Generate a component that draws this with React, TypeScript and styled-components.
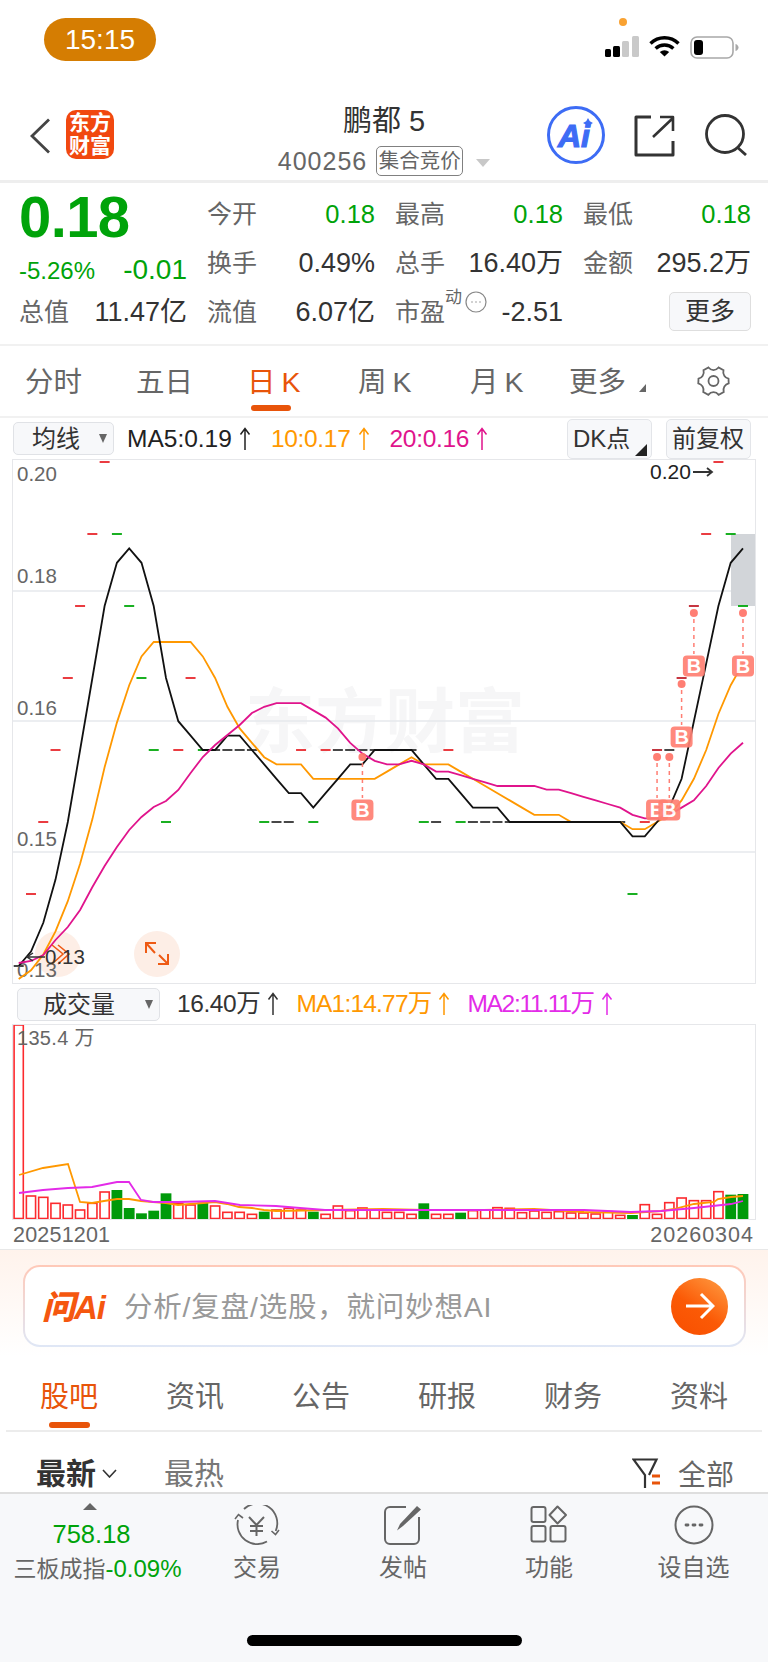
import styled, { createGlobalStyle } from 'styled-components';

const GlobalStyle = createGlobalStyle`
  html, body {
    margin: 0;
    padding: 0;
    background: #fff;
  }
  body {
    font-family: "Liberation Sans", "Noto Sans CJK SC", sans-serif;
  }
`;

const GREEN = '#00a30a';
const ACCENT = '#e8540a';
const ORANGE = '#ff9800';
const PINK = '#e0148c';
const MAGENTA = '#e32be8';

const Page = styled.div`
  width: 768px;
  height: 1663px;
  overflow: hidden;
  background: #fff;
`;

/* status bar */
const StatusBar = styled.div`
  height: 95px;
  box-sizing: border-box;
  padding: 18px 29px 0 44px;
  display: flex;
  justify-content: space-between;
`;

const TimePill = styled.div`
  width: 112px;
  height: 43px;
  border-radius: 22px;
  background: #d57d02;
  color: #fff;
  font-size: 28px;
  line-height: 43px;
  text-align: center;
`;

const StatusIcons = styled.div`
  position: relative;
  padding-top: 18px;
  display: flex;
  align-items: flex-start;
  gap: 10px;
`;

const RecordingDot = styled.span`
  position: absolute;
  top: 0;
  left: 14px;
  width: 8px;
  height: 8px;
  border-radius: 50%;
  background: #f9a232;
`;

/* nav */
const NavBar = styled.div`
  height: 88px;
  box-sizing: border-box;
  border-bottom: 3px solid #eeeeee;
  padding: 8px 20px 0;
  display: grid;
  grid-template-columns: 1fr auto 1fr;
`;

const NavLeft = styled.div`
  display: flex;
  align-items: flex-start;
  gap: 16px;
  padding: 7px 0 0 10px;
`;

const NavIcon = styled.svg<{ $top?: number }>`
  margin-top: ${(p) => p.$top ?? 0}px;
`;

const BrandLogo = styled.div`
  width: 48px;
  height: 49px;
  border-radius: 10px;
  background: #f1480f;
  color: #fff;
  font-size: 21px;
  font-weight: 700;
  line-height: 23px;
  text-align: center;
  padding-top: 1px;
  box-sizing: border-box;
`;

const NavCenter = styled.div`
  display: flex;
  flex-direction: column;
  align-items: center;
`;

const StockName = styled.div`
  font-size: 29px;
  line-height: 36px;
  color: #333;
`;

const StockMeta = styled.div`
  display: flex;
  align-items: center;
  margin-top: 7px;
`;

const StockCode = styled.span`
  font-size: 25px;
  letter-spacing: 1px;
  color: #666;
  margin-right: 9px;
`;

const StateTag = styled.span`
  width: 87px;
  height: 30px;
  box-sizing: border-box;
  border: 1px solid #808080;
  border-radius: 5px;
  font-size: 20.5px;
  line-height: 28px;
  text-align: center;
  color: #666;
  white-space: nowrap;
`;

const MetaCaret = styled.span`
  margin-left: 13px;
  margin-top: 3px;
  border-left: 7px solid transparent;
  border-right: 7px solid transparent;
  border-top: 8px solid #c8c8c8;
`;

const NavRight = styled.div`
  display: flex;
  justify-content: flex-end;
  align-items: flex-start;
  gap: 29px;
  padding-top: 3px;
`;

/* quote */
const Quote = styled.div`
  height: 163px;
  box-sizing: border-box;
  border-bottom: 2px solid #f1f1f1;
  padding: 6px 0 0 19px;
  display: grid;
  grid-template-columns: repeat(4, 168px);
  column-gap: 20px;
  grid-template-rows: 49px 49px 49px;
  align-items: center;
`;

const PriceBlock = styled.div`
  grid-row: 1 / 3;
  align-self: start;
`;

const BigPrice = styled.div`
  font-size: 58px;
  font-weight: 700;
  line-height: 56px;
  color: ${GREEN};
  letter-spacing: -0.6px;
`;

const ChangeRow = styled.div`
  display: flex;
  justify-content: space-between;
  align-items: baseline;
  margin-top: 9px;
  color: ${GREEN};
`;

const ChangePct = styled.span`
  font-size: 24px;
`;

const ChangeAbs = styled.span`
  font-size: 28px;
`;

const QuoteCell = styled.div`
  display: flex;
  justify-content: space-between;
  align-items: center;
  font-size: 25px;
  line-height: 30px;
  white-space: nowrap;
`;

const QuoteLabel = styled.span`
  color: #666;
  position: relative;
`;

const QuoteValue = styled.span<{ $green?: boolean }>`
  font-size: ${(p) => (p.$green ? 25.5 : 27)}px;
  color: ${(p) => (p.$green ? GREEN : '#333')};
`;

const PeLabel = styled.span`
  display: flex;
  align-items: flex-start;
  color: #666;
`;

const PeSup = styled.span`
  font-size: 17px;
  line-height: 18px;
  margin-top: -8px;
`;

const PeDots = styled.svg`
  margin: -6px 0 0 3px;
`;

const MoreCell = styled.div`
  display: flex;
  justify-content: flex-end;
`;

const MoreButton = styled.div`
  width: 82px;
  height: 39px;
  box-sizing: border-box;
  border: 1px solid #dedede;
  border-radius: 5px;
  background: #f7f8fa;
  font-size: 25px;
  line-height: 37px;
  text-align: center;
  color: #333;
`;

/* period tabs */
const PeriodTabs = styled.div`
  height: 72px;
  box-sizing: border-box;
  border-bottom: 2px solid #f1f1f1;
  padding: 0 38px 0 25px;
  display: flex;
  align-items: center;
`;

const PeriodTab = styled.div<{ $active?: boolean; $width: number }>`
  position: relative;
  width: ${(p) => p.$width}px;
  font-size: 28.5px;
  line-height: 40px;
  margin-top: 2px;
  word-spacing: -2px;
  color: ${(p) => (p.$active ? ACCENT : '#666')};
  white-space: nowrap;

  ${(p) =>
    p.$active &&
    `
    &::after {
      content: '';
      position: absolute;
      left: 4px;
      top: 43px;
      width: 40px;
      height: 6px;
      border-radius: 3px;
      background: ${ACCENT};
    }
  `}
`;

const MoreTab = styled(PeriodTab)`
  &::before {
    content: '';
    position: absolute;
    left: 70px;
    top: 22px;
    border-left: 7px solid transparent;
    border-bottom: 8px solid #666;
  }
`;

const GearSlot = styled.div`
  margin-left: auto;
  height: 32px;
`;

/* chart toolbars */
const ChartBar = styled.div<{ $height: number; $pad: number; $gap: number }>`
  height: ${(p) => p.$height}px;
  box-sizing: border-box;
  padding: 0 17px 0 ${(p) => p.$pad}px;
  display: flex;
  align-items: center;
  gap: ${(p) => p.$gap}px;
  white-space: nowrap;
`;

const SelectBox = styled.div<{ $width: number; $indent: number; $trail?: number }>`
  position: relative;
  width: ${(p) => p.$width}px;
  height: 33px;
  box-sizing: border-box;
  border: 1px solid #e0e2e6;
  border-radius: 5px;
  background: #f7f8fa;
  padding-left: ${(p) => p.$indent}px;
  margin-right: ${(p) => p.$trail ?? 0}px;
  font-size: 24px;
  line-height: 31px;
  color: #333;

  &::after {
    content: '';
    position: absolute;
    right: 6px;
    top: 11px;
    border-left: 4.5px solid transparent;
    border-right: 4.5px solid transparent;
    border-top: 9px solid #666;
  }
`;

const Legend = styled.span<{ $color: string; $tight?: number }>`
  display: inline-flex;
  align-items: center;
  gap: 7px;
  font-size: 24.5px;
  line-height: 30px;
  letter-spacing: ${(p) => p.$tight ?? 0}px;
  color: ${(p) => p.$color};
`;

const BarActions = styled.div`
  margin-left: auto;
  display: flex;
  gap: 14px;
`;

const BarButton = styled.div<{ $corner?: boolean }>`
  position: relative;
  width: 85px;
  height: 40px;
  box-sizing: border-box;
  border: 1px solid #e3e5e9;
  border-radius: 5px;
  background: #f7f8fa;
  padding-left: 5px;
  font-size: 24px;
  line-height: 38px;
  color: #333;

  ${(p) =>
    p.$corner &&
    `
    &::after {
      content: '';
      position: absolute;
      right: 4px;
      bottom: 2px;
      border-left: 12px solid transparent;
      border-bottom: 12px solid #222;
    }
  `}
`;

const ChartPanel = styled.div<{ $height: number }>`
  margin-left: 12px;
  width: 744px;
  height: ${(p) => p.$height}px;
  box-sizing: border-box;
  border: 1px solid #e6e7ea;
`;

const ChartSvg = styled.svg`
  display: block;
`;

const DateRow = styled.div`
  height: 30px;
  box-sizing: border-box;
  padding: 2px 14px 0 13px;
  border-bottom: 1px solid #e8e8e8;
  display: flex;
  justify-content: space-between;
  font-size: 21.5px;
  line-height: 26px;
  letter-spacing: 0.2px;
  color: #666;
`;

const DateEnd = styled.span`
  letter-spacing: 1px;
`;

/* ask AI */
const AskSection = styled.div`
  height: 112px;
  box-sizing: border-box;
  padding: 15px 22px 0 23px;
  background: linear-gradient(#fff3ec, #ffffff 95%);
`;

const AskBox = styled.div`
  height: 82px;
  box-sizing: border-box;
  border-radius: 17px;
  border: 2px solid transparent;
  background: linear-gradient(#fff, #fff) padding-box,
    linear-gradient(#ffc9b8, #dfe7f6) border-box;
  padding: 0 16px 0 17px;
  display: flex;
  align-items: center;
`;

const AskBrand = styled.span`
  width: 82px;
  margin-top: -3px;
  font-size: 33px;
  font-weight: 900;
  font-style: italic;
  letter-spacing: -1px;
  color: #f5570f;
  white-space: nowrap;
`;

const AskText = styled.span`
  margin-top: -3px;
  font-size: 28.5px;
  letter-spacing: 0.8px;
  color: #999;
  white-space: nowrap;
`;

const AskGo = styled.div`
  margin-left: auto;
  width: 57px;
  height: 57px;
  border-radius: 50%;
  background: linear-gradient(215deg, #ff9f45, #fb5a06 55%, #f84e00);
  display: flex;
  align-items: center;
  justify-content: center;
`;

/* content tabs */
const ContentTabs = styled.div`
  height: 70px;
  margin: 0 6px;
  box-sizing: border-box;
  border-bottom: 2px solid #ececec;
  padding: 15px 34px 0;
  display: flex;
  justify-content: space-between;
  align-items: flex-start;
`;

const ContentTab = styled.div<{ $active?: boolean }>`
  position: relative;
  font-size: 29px;
  line-height: 40px;
  color: ${(p) => (p.$active ? ACCENT : '#666')};

  ${(p) =>
    p.$active &&
    `
    &::after {
      content: '';
      position: absolute;
      left: 9px;
      top: 45px;
      width: 41px;
      height: 6px;
      border-radius: 3px;
      background: ${ACCENT};
    }
  `}
`;

const FeedFilter = styled.div`
  height: 60px;
  box-sizing: border-box;
  padding: 23px 34px 0 36px;
  display: flex;
  align-items: center;
`;

const FeedSort = styled.span<{ $active?: boolean }>`
  font-size: 30px;
  font-weight: ${(p) => (p.$active ? 700 : 400)};
  line-height: 38px;
  color: ${(p) => (p.$active ? '#333' : '#777')};
`;

const SortChevron = styled.svg`
  margin: 0 47px 0 6px;
`;

const FeedAll = styled.span`
  margin: -2px 0 0 auto;
  display: flex;
  align-items: center;
  gap: 16px;
  font-size: 28px;
  color: #666;
`;

/* bottom bar */
const BottomBar = styled.div`
  height: 170px;
  box-sizing: border-box;
  border-top: 2px solid #dedede;
  background: #f7f8fa;
  position: relative;
`;

const BottomRow = styled.div`
  display: flex;
  height: 90px;
`;

const IndexCell = styled.div`
  width: 187px;
  padding-top: 9px;
  display: flex;
  flex-direction: column;
  align-items: center;
`;

const IndexCaret = styled.span`
  border-left: 7px solid transparent;
  border-right: 7px solid transparent;
  border-bottom: 7px solid #666;
  margin-right: 7px;
`;

const IndexValue = styled.span`
  font-size: 25.5px;
  line-height: 30px;
  margin: 9px 4px 0 0;
  color: ${GREEN};
`;

const IndexName = styled.span`
  margin-top: 5px;
  font-size: 23px;
  line-height: 30px;
  color: #666;
  white-space: nowrap;
  margin-left: 8px;
`;

const IndexChange = styled.span`
  font-size: 24px;
  color: ${GREEN};
`;

const ToolCell = styled.div<{ $width: number }>`
  width: ${(p) => p.$width}px;
  padding-top: 11px;
  display: flex;
  flex-direction: column;
  align-items: center;
  font-size: 24px;
  color: #666;
`;

const ToolIcon = styled.div`
  height: 40px;
  margin-bottom: 8px;
`;

const ToolLabel = styled.span`
  line-height: 30px;
`;

const HomeIndicator = styled.div`
  position: absolute;
  left: 247px;
  bottom: 16px;
  width: 275px;
  height: 11px;
  border-radius: 6px;
  background: #000;
`;

/* chart data: every session opened and closed flat, so a tick is one level */
const LEVELS = [
  13, 14, 15, 16, 17, 18, 19, 20, 19, 18, 17, 16, 15, 16, 17, 16, 16, 16, 16, 16,
  15, 15, 15, 16, 15, 16, 16, 16, 16, 16, 16, 16, 16, 15, 15, 16, 15, 15, 15, 15,
  15, 15, 15, 15, 15, 15, 15, 15, 15, 15, 14, 15, 16, 16, 17, 18, 19, 20, 19, 18,
];
const TONES = 'krrrrrrrgggggrrgkkkkgkkrgrkkkkkkkgkrgkkkkkkkkkkkkkgrdkddrrgg';
const TONE_COLOR: Record<string, string> = {
  r: '#e8262c',
  g: '#00a80a',
  k: '#333333',
  d: '#c0202c',
};
const candleX = (i: number) => 18.7 + i * 12.276;
const priceY = (v: number) => 966 - (v - 13) * 72;

const movingAverage = (n: number, before: number) =>
  LEVELS.map((_, i) => {
    let sum = 0;
    for (let j = i - n + 1; j <= i; j++) sum += j >= 0 ? LEVELS[j] : before;
    return priceY(sum / n);
  });

const ma5 = movingAverage(5, 13);
const ma10 = movingAverage(10, 12.8);
const ma20Head = [
  963, 961, 955, 940, 927, 910, 887, 866, 847, 830, 817, 807, 801, 790, 773, 757, 745, 735, 725, 713,
];
const ma20 = movingAverage(20, 13).map((y, i) => (i < 20 ? ma20Head[i] : y));
const toPoints = (ys: number[]) => ys.map((y, i) => `${candleX(i).toFixed(1)},${y.toFixed(1)}`).join(' ');

const GRID_Y = [591, 721, 852];
const PRICE_LABELS = [
  { text: '0.20', y: 481 },
  { text: '0.18', y: 583 },
  { text: '0.16', y: 715 },
  { text: '0.15', y: 846 },
  { text: '0.13', y: 977 },
];
const SIGNALS = [
  { i: 28, dotY: 757, badgeY: 810 },
  { i: 52, dotY: 757, badgeY: 810 },
  { i: 53, dotY: 757, badgeY: 810 },
  { i: 54, dotY: 684, badgeY: 737 },
  { i: 55, dotY: 613, badgeY: 666 },
  { i: 59, dotY: 613, badgeY: 666 },
];

const VOLUME_TOPS = [
  135, 648, 652, 670, 675, 690, 670, 636, 630, 684, 700, 692, 640, 670, 675, 668, 678, 697, 697, 703,
  695, 690, 685, 690, 695, 703, 678, 692, 684, 690, 697, 697, 703, 670, 703, 703, 698, 692, 690, 683,
  685, 698, 693, 697, 695, 699, 699, 702, 695, 706, 705, 674, 703, 668, 654, 662, 662, 635, 644, 642,
];
const VOLUME_DOWN = [8, 9, 10, 11, 12, 15, 20, 24, 33, 36, 50, 58, 59];
const VOL_MA1 =
  '19,1175 43,1168 68,1164 80,1202 92,1203 104,1201 117,1199 129,1199 141,1201 153,1202 166,1203 178,1205 190,1204 203,1203 215,1202 227,1204 239,1207 252,1208 264,1210 276,1211 383,1209 424,1210 484,1210 534,1209 584,1212 631,1213 661,1211 674,1209 694,1204 714,1202 718,1199 731,1197 743,1196';
const VOL_MA2 =
  '19,1193 43,1190 68,1188 92,1187 117,1182 129,1182 141,1200 153,1202 178,1202 215,1201 240,1205 276,1206 300,1208 325,1210 383,1210 484,1210 584,1210 631,1212 661,1211 694,1208 731,1204 743,1201';

const ArrowUp = () => (
  <svg width="12" height="24" viewBox="0 0 12 24" fill="none" stroke="currentColor" strokeWidth="1.5">
    <path d="M6 23V2M1.5 7.5 6 1.5l4.5 6" />
  </svg>
);

const PriceChart = () => (
  <ChartSvg width="742" height="523" viewBox="13 460 742 523" fontFamily='"Liberation Sans", sans-serif'>
    <text x="245" y="747" fontSize="70" fontWeight="700" fill="#f6f6f7" fontFamily='"Noto Sans CJK SC", sans-serif'>
      东方财富
    </text>
    {GRID_Y.map((y) => (
      <line key={y} x1="13" x2="755" y1={y} y2={y} stroke="#e6e8ed" strokeWidth="1.5" />
    ))}
    <rect x="731" y="534" width="24" height="72" fill="#d2d5d9" />
    {LEVELS.map((level, i) => (
      <line
        key={i}
        x1={candleX(i) - 5}
        x2={candleX(i) + 5}
        y1={priceY(level)}
        y2={priceY(level)}
        stroke={TONE_COLOR[TONES[i]]}
        strokeWidth="1.8"
      />
    ))}
    <circle cx="58" cy="954" r="23" fill="#fdeee6" />
    <circle cx="157" cy="954" r="23" fill="#fdeee6" />
    {PRICE_LABELS.map((l) => (
      <text key={l.text} x="17" y={l.y} fontSize="20.5" fill="#666">
        {l.text}
      </text>
    ))}
    <polyline points={toPoints(ma10)} fill="none" stroke={ORANGE} strokeWidth="1.8" />
    <polyline points={toPoints(ma5)} fill="none" stroke="#111" strokeWidth="1.8" />
    <polyline points={toPoints(ma20)} fill="none" stroke={PINK} strokeWidth="1.8" />
    <g fill="none" stroke="#ee5a14" strokeWidth="1.6">
      <path d="M52 945l11 9-11 10M58 945l11 9-11 10" />
      <path d="M146 953v-10h10M146 943l9 10M168 954v10h-10M168 964l-9-9" strokeWidth="2" />
    </g>
    <path d="M45 957H28M33 953l-6 4 6 4" fill="none" stroke="#333" strokeWidth="1.5" />
    <text x="45" y="964" fontSize="20.5" fill="#333">
      0.13
    </text>
    <text x="650" y="479" fontSize="21" fill="#222">
      0.20
    </text>
    <path d="M693 472h19M707 468l5 4-5 4" fill="none" stroke="#333" strokeWidth="1.8" />
    {SIGNALS.map((s) => {
      const x = candleX(s.i);
      return (
        <g key={s.i} opacity="0.92">
          <circle cx={x} cy={s.dotY} r="4" fill="#ff7468" />
          <line x1={x} x2={x} y1={s.dotY + 6} y2={s.badgeY - 12} stroke="#ff7468" strokeWidth="1.5" strokeDasharray="4 4" />
          <rect x={x - 11} y={s.badgeY - 10.5} width="22" height="21" rx="4" fill="#ff7f72" />
          <text x={x} y={s.badgeY + 7} textAnchor="middle" fontSize="20" fontWeight="700" fill="#fff">
            B
          </text>
        </g>
      );
    })}
  </ChartSvg>
);

const VolumeChart = () => (
  <ChartSvg width="742" height="194" viewBox="13 1025 742 194" fontFamily='"Liberation Sans", "Noto Sans CJK SC", sans-serif'>
    {VOLUME_TOPS.map((top, i) => {
      const y = 980 + top / 3;
      const down = VOLUME_DOWN.includes(i);
      return down ? (
        <rect key={i} x={candleX(i) - 5.4} y={y} width="10.8" height={1219 - y} fill="#009a0a" />
      ) : (
        <rect
          key={i}
          x={candleX(i) - 4.6}
          y={y}
          width="9.2"
          height={Math.max(1218.5 - y, 2)}
          fill="#fff"
          stroke="#fc2a2e"
          strokeWidth="1.6"
        />
      );
    })}
    <text x="17" y="1045" fontSize="20" letterSpacing="0.3" fill="#666">
      135.4 万
    </text>
    <polyline points={VOL_MA1} fill="none" stroke={ORANGE} strokeWidth="1.8" />
    <polyline points={VOL_MA2} fill="none" stroke={MAGENTA} strokeWidth="1.8" />
  </ChartSvg>
);

const App = () => {
  return (
    <Page>
      <GlobalStyle />
      <StatusBar>
        <TimePill>15:15</TimePill>
        <StatusIcons>
          <RecordingDot />
          <svg width="34" height="21" viewBox="0 0 34 21">
            <rect x="0" y="13" width="6" height="8" rx="1.5" fill="#000" />
            <rect x="8" y="10" width="7" height="11" rx="1.5" fill="#000" />
            <rect x="17" y="5" width="7" height="16" rx="1.5" fill="#c9c9c9" />
            <rect x="27" y="0" width="7" height="21" rx="1.5" fill="#c9c9c9" />
          </svg>
          <svg width="31" height="21" viewBox="0 0 31 21" fill="none" stroke="#000" strokeWidth="3.4">
            <path d="M1.500 7.500a20 20 0 0 1 28 0" />
            <path d="M6.600 12.500a13 13 0 0 1 17.800 0" />
            <path d="M15.500 20.500 10.800 16a7 7 0 0 1 9.400 0z" fill="#000" stroke="none" />
          </svg>
          <svg width="49" height="23" viewBox="0 0 49 23">
            <rect x="1" y="1" width="42" height="21" rx="6" fill="none" stroke="#a8a8a8" strokeWidth="1.6" />
            <rect x="4" y="4" width="9" height="15" rx="3" fill="#000" />
            <path d="M45.500 8v7c2-.6 3-2 3-3.500S47.500 8.600 45.500 8z" fill="#a8a8a8" />
          </svg>
        </StatusIcons>
      </StatusBar>

      <NavBar>
        <NavLeft>
          <NavIcon $top={8} width="20" height="36" viewBox="0 0 20 36" fill="none" stroke="#444" strokeWidth="2.8">
            <path d="M19 1.500 2 18l17 16.500" />
          </NavIcon>
          <BrandLogo>
            东方
            <br />
            财富
          </BrandLogo>
        </NavLeft>
        <NavCenter>
          <StockName>鹏都 5</StockName>
          <StockMeta>
            <StockCode>400256</StockCode>
            <StateTag>集合竞价</StateTag>
            <MetaCaret />
          </StockMeta>
        </NavCenter>
        <NavRight>
          <NavIcon width="58" height="58" viewBox="0 0 58 58">
            <circle cx="29" cy="29" r="27.500" fill="#fff" stroke="#3d6cf5" strokeWidth="3" />
            <text
              x="11"
              y="41"
              fontSize="32"
              fontWeight="700"
              fontStyle="italic"
              fill="#3d6cf5"
              stroke="#3d6cf5"
              strokeWidth="1.200"
              fontFamily='"Liberation Sans", sans-serif'
            >
              Ai
            </text>
            <path d="M41 12l1.800 3.200 3.200 1.800-3.200 1.800-1.800 3.200-1.800-3.200-3.200-1.800 3.200-1.800z" fill="#3d6cf5" />
          </NavIcon>
          <NavIcon
            $top={9}
            width="42"
            height="42"
            viewBox="0 0 42 42"
            fill="none"
            stroke="#333"
            strokeWidth="3"
            strokeLinejoin="round"
          >
            <path d="M17 2H2v38h37V26" />
            <path d="M19 22 39 3M26 2h13v14" strokeWidth="2.600" />
          </NavIcon>
          <NavIcon $top={8} width="43" height="42" viewBox="0 0 43 42" fill="none" stroke="#333" strokeWidth="2.800">
            <circle cx="20" cy="20" r="18.500" />
            <path d="M32 33l9 8" />
          </NavIcon>
        </NavRight>
      </NavBar>

      <Quote>
        <PriceBlock>
          <BigPrice>0.18</BigPrice>
          <ChangeRow>
            <ChangePct>-5.26%</ChangePct>
            <ChangeAbs>-0.01</ChangeAbs>
          </ChangeRow>
        </PriceBlock>
        <QuoteCell>
          <QuoteLabel>今开</QuoteLabel>
          <QuoteValue $green>0.18</QuoteValue>
        </QuoteCell>
        <QuoteCell>
          <QuoteLabel>最高</QuoteLabel>
          <QuoteValue $green>0.18</QuoteValue>
        </QuoteCell>
        <QuoteCell>
          <QuoteLabel>最低</QuoteLabel>
          <QuoteValue $green>0.18</QuoteValue>
        </QuoteCell>
        <QuoteCell>
          <QuoteLabel>换手</QuoteLabel>
          <QuoteValue>0.49%</QuoteValue>
        </QuoteCell>
        <QuoteCell>
          <QuoteLabel>总手</QuoteLabel>
          <QuoteValue>16.40万</QuoteValue>
        </QuoteCell>
        <QuoteCell>
          <QuoteLabel>金额</QuoteLabel>
          <QuoteValue>295.2万</QuoteValue>
        </QuoteCell>
        <QuoteCell>
          <QuoteLabel>总值</QuoteLabel>
          <QuoteValue>11.47亿</QuoteValue>
        </QuoteCell>
        <QuoteCell>
          <QuoteLabel>流值</QuoteLabel>
          <QuoteValue>6.07亿</QuoteValue>
        </QuoteCell>
        <QuoteCell>
          <PeLabel>
            市盈
            <PeSup>动</PeSup>
            <PeDots width="22" height="22" viewBox="0 0 22 22" fill="none" stroke="#888" strokeWidth="1.200">
              <circle cx="11" cy="11" r="10" />
              <path d="M6.500 11h1M10.500 11h1M14.500 11h1" strokeWidth="1.600" />
            </PeDots>
          </PeLabel>
          <QuoteValue>-2.51</QuoteValue>
        </QuoteCell>
        <MoreCell>
          <MoreButton>更多</MoreButton>
        </MoreCell>
      </Quote>

      <PeriodTabs>
        <PeriodTab $width={111}>分时</PeriodTab>
        <PeriodTab $width={111}>五日</PeriodTab>
        <PeriodTab $width={111} $active>
          日 K
        </PeriodTab>
        <PeriodTab $width={112}>周 K</PeriodTab>
        <PeriodTab $width={99}>月 K</PeriodTab>
        <MoreTab $width={90}>更多</MoreTab>
        <GearSlot>
          <svg width="33" height="32" viewBox="0 0 33 32" fill="none" stroke="#666" strokeWidth="1.800">
            <path d="M11.500 2.500c1.500 1.800 3 2.600 5 2.600s3.500-.8 5-2.600l5 2.600c-.6 2.300-.3 4 .8 5.600 1 1.600 2.300 2.500 4.200 3l.2 4.700c-1.900.6-3.200 1.500-4.300 3.100-1 1.700-1.300 3.300-.7 5.600l-5 2.800c-1.500-1.900-3-2.700-5.200-2.700s-3.700.8-5.200 2.700l-5-2.800c.6-2.300.3-3.900-.7-5.600-1-1.600-2.400-2.500-4.300-3.100l.2-4.700c1.900-.5 3.200-1.400 4.200-3 1.100-1.600 1.400-3.300.8-5.600z" />
            <circle cx="16.500" cy="16" r="5" />
          </svg>
        </GearSlot>
      </PeriodTabs>

      <ChartBar $height={41} $pad={13} $gap={20}>
        <SelectBox $width={101} $indent={18} $trail={-7}>
          均线
        </SelectBox>
        <Legend $color="#222">
          MA5:0.19
          <ArrowUp />
        </Legend>
        <Legend $color={ORANGE} $tight={-0.3}>
          10:0.17
          <ArrowUp />
        </Legend>
        <Legend $color={PINK} $tight={-0.3}>
          20:0.16
          <ArrowUp />
        </Legend>
        <BarActions>
          <BarButton $corner>DK点</BarButton>
          <BarButton>前复权</BarButton>
        </BarActions>
      </ChartBar>
      <ChartPanel $height={525}>
        <PriceChart />
      </ChartPanel>

      <ChartBar $height={40} $pad={17} $gap={17}>
        <SelectBox $width={143} $indent={25}>
          成交量
        </SelectBox>
        <Legend $color="#333" $tight={-0.4}>
          16.40万
          <ArrowUp />
        </Legend>
        <Legend $color={ORANGE} $tight={-0.8}>
          MA1:14.77万
          <ArrowUp />
        </Legend>
        <Legend $color={MAGENTA} $tight={-1.3}>
          MA2:11.11万
          <ArrowUp />
        </Legend>
      </ChartBar>
      <ChartPanel $height={196}>
        <VolumeChart />
      </ChartPanel>
      <DateRow>
        <span>20251201</span>
        <DateEnd>20260304</DateEnd>
      </DateRow>

      <AskSection>
        <AskBox>
          <AskBrand>问Ai</AskBrand>
          <AskText>分析/复盘/选股，就问妙想AI</AskText>
          <AskGo>
            <svg width="30" height="28" viewBox="0 0 30 28" fill="none" stroke="#fff" strokeWidth="3">
              <path d="M1 14h27M16 2l12 12-12 12" />
            </svg>
          </AskGo>
        </AskBox>
      </AskSection>

      <ContentTabs>
        <ContentTab $active>股吧</ContentTab>
        <ContentTab>资讯</ContentTab>
        <ContentTab>公告</ContentTab>
        <ContentTab>研报</ContentTab>
        <ContentTab>财务</ContentTab>
        <ContentTab>资料</ContentTab>
      </ContentTabs>

      <FeedFilter>
        <FeedSort $active>最新</FeedSort>
        <SortChevron width="15" height="9" viewBox="0 0 15 9" fill="none" stroke="#333" strokeWidth="1.600">
          <path d="M1 1l6.500 7L14 1" />
        </SortChevron>
        <FeedSort>最热</FeedSort>
        <FeedAll>
          <svg width="30" height="30" viewBox="0 0 30 30" fill="none" stroke="#333" strokeWidth="2.200">
            <path d="M13 30V17L1.500 1.500h23L17 17" />
            <path d="M20 18h8M20 25h8" stroke={ACCENT} strokeWidth="3" />
          </svg>
          全部
        </FeedAll>
      </FeedFilter>

      <BottomBar>
        <BottomRow>
          <IndexCell>
            <IndexCaret />
            <IndexValue>758.18</IndexValue>
            <IndexName>
              三板成指<IndexChange>-0.09%</IndexChange>
            </IndexName>
          </IndexCell>
          <ToolCell $width={140}>
            <ToolIcon>
              <svg width="46" height="40" viewBox="0 0 46 40" fill="none" stroke="#666" strokeWidth="1.800">
                <path d="M10 4A19.700 19.700 0 0 1 41.700 26" />
                <path d="M33 36.500A19.700 19.700 0 0 1 4 15" />
                <path d="M37.500 26l4 3.500 3.500-4.500M1 14l3.500-4.500L9 13" strokeWidth="1.600" />
                <path d="M15 12l7.500 8 7.500-8M16 21h13M16 26h13M22.500 20v11" strokeWidth="2" />
              </svg>
            </ToolIcon>
            <ToolLabel>交易</ToolLabel>
          </ToolCell>
          <ToolCell $width={152}>
            <ToolIcon>
              <svg width="38" height="40" viewBox="0 0 38 40" fill="none" stroke="#666" strokeWidth="2">
                <path d="M22 2H6a5 5 0 0 0-5 5v27a5 5 0 0 0 5 5h24a5 5 0 0 0 5-5V12" />
                <path d="M33 1 37 4.500 19 21l-6 4.500 3-6.500z" fill="#666" stroke="none" />
              </svg>
            </ToolIcon>
            <ToolLabel>发帖</ToolLabel>
          </ToolCell>
          <ToolCell $width={140}>
            <ToolIcon>
              <svg width="38" height="38" viewBox="0 0 38 38" fill="none" stroke="#666" strokeWidth="2">
                <rect x="1.500" y="2" width="14" height="15" rx="2" />
                <path d="M27.500 1.500 36 10l-8.500 8.500L19.500 10z" strokeLinejoin="round" />
                <rect x="1.500" y="21" width="14" height="15.500" rx="2" />
                <rect x="20.500" y="21" width="15" height="15.500" rx="2" />
              </svg>
            </ToolIcon>
            <ToolLabel>功能</ToolLabel>
          </ToolCell>
          <ToolCell $width={149}>
            <ToolIcon>
              <svg width="40" height="40" viewBox="0 0 40 40" fill="none" stroke="#666" strokeWidth="2">
                <circle cx="20" cy="20" r="18.500" />
                <path d="M12 20h2M19 20h2M26 20h2" strokeWidth="2.800" strokeLinecap="round" />
              </svg>
            </ToolIcon>
            <ToolLabel>设自选</ToolLabel>
          </ToolCell>
        </BottomRow>
        <HomeIndicator />
      </BottomBar>
    </Page>
  );
};

export default App;
